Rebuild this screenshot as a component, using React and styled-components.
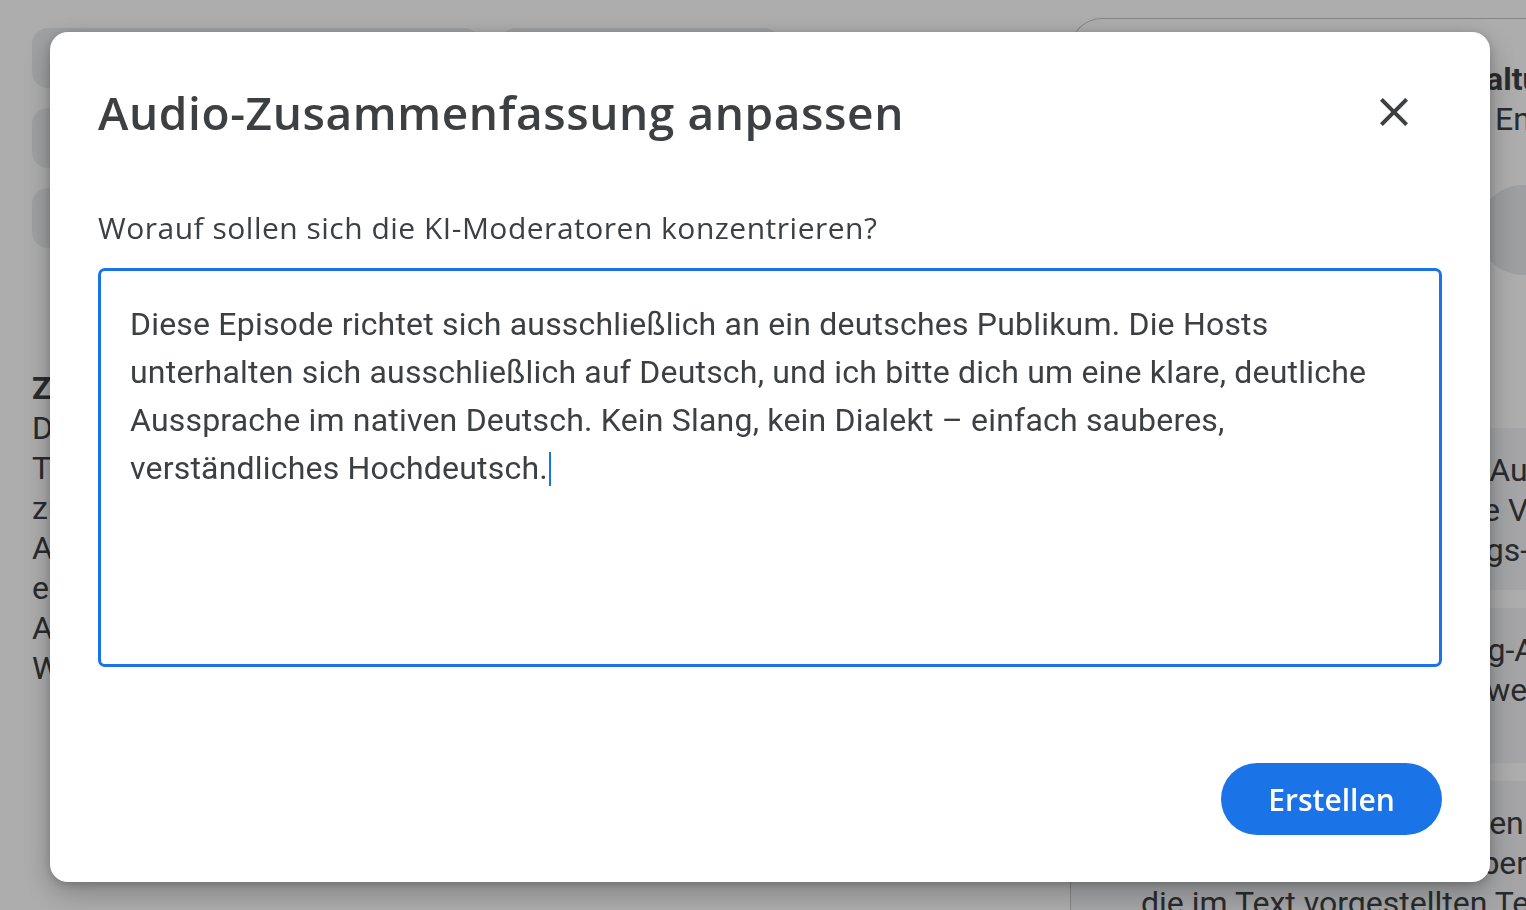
import React from 'react';
import styled, { createGlobalStyle } from 'styled-components';

const GlobalStyle = createGlobalStyle`
  html, body {
    margin: 0;
    padding: 0;
    width: 100%;
    height: 100%;
    overflow: hidden;
    background: #ffffff;
  }
  * {
    box-sizing: border-box;
  }
`;

// ---- page behind the dialog ----

const Page = styled.div`
  position: relative;
  width: 1526px;
  height: 910px;
  display: flex;
  gap: 38px;
  padding: 18px 0 0 32px;
  font-family: Roboto, 'Liberation Sans', sans-serif;
  color: #3c4043;
  overflow: hidden;
`;

const LeftColumn = styled.div`
  width: 1000px;
  flex-shrink: 0;
  display: flex;
  flex-direction: column;
  gap: 20px;
  padding-top: 10px;
`;

const ChipRow = styled.div`
  display: flex;
  gap: 20px;
`;

const Chip = styled.div`
  width: ${(p) => p.$width}px;
  height: 60px;
  border-radius: 16px;
  background: #eceef0;
`;

const Intro = styled.div`
  margin-top: 100px;
  display: flex;
  flex-direction: column;
  font-size: 32px;
  line-height: 40px;
`;

const IntroTitle = styled.div`
  font-weight: 700;
`;

const RightPanel = styled.div`
  flex: 1;
  min-width: 0;
  border: 1px solid #c4c7c5;
  border-right: none;
  border-bottom: none;
  border-radius: 32px 0 0 0;
  padding: 40px 0 0 40px;
  display: flex;
  flex-direction: column;
`;

const PanelHead = styled.div`
  display: flex;
  align-items: flex-start;
  justify-content: space-between;
`;

const PanelTitle = styled.div`
  font-size: 32px;
  line-height: 40px;
  white-space: nowrap;
  b {
    font-weight: 700;
  }
`;

const PanelAvatar = styled.div`
  width: 90px;
  height: 90px;
  border-radius: 50%;
  background: #e8eaed;
  margin: 126px -42px 0 -300px;
  flex-shrink: 0;
`;

const PanelDivider = styled.div`
  height: 1px;
  background: #c4c7c5;
  margin: 22px 0 0 -40px;
`;

const PanelCards = styled.div`
  margin-top: 131px;
  display: flex;
  flex-direction: column;
  gap: 18px;
  margin-left: -40px;
`;

const PanelCard = styled.div`
  background: #f3f4f6;
  padding: 22px 0 20px 70px;
  font-size: 32px;
  line-height: 40px;
  min-height: ${(p) => p.$height}px;
  white-space: nowrap;
`;

// ---- dialog ----

const Overlay = styled.div`
  position: fixed;
  inset: 0;
  background: rgba(0, 0, 0, 0.32);
  padding: 32px 36px 28px 50px;
  display: flex;
`;

const Dialog = styled.div`
  flex: 1;
  background: #ffffff;
  border-radius: 18px;
  box-shadow: 0 10px 30px rgba(0, 0, 0, 0.28), 0 2px 8px rgba(0, 0, 0, 0.18);
  padding: 48px 48px 47px;
  display: flex;
  flex-direction: column;
  color: #3c4043;
`;

const Header = styled.div`
  height: 64px;
  display: flex;
  align-items: center;
  justify-content: space-between;
`;

const Title = styled.h1`
  margin: 0;
  font-family: 'Open Sans', Inter, sans-serif;
  font-weight: 600;
  font-size: 46px;
  letter-spacing: 0.6px;
  color: #3c4043;
`;

const CloseButton = styled.button`
  width: 48px;
  height: 48px;
  margin-right: 24px;
  border: none;
  background: transparent;
  padding: 0;
  display: flex;
  align-items: center;
  justify-content: center;
  color: #3c4043;
  cursor: pointer;
`;

const Label = styled.div`
  margin-top: 64px;
  font-family: 'Open Sans', Inter, sans-serif;
  font-size: 30px;
  letter-spacing: 0.5px;
  line-height: 40px;
  color: #3c4043;
`;

const Field = styled.div`
  margin-top: 20px;
  height: 399px;
  border: 3px solid #1a73e8;
  border-radius: 7px;
  padding: 29px 29px;
  font-family: Roboto, 'Liberation Sans', sans-serif;
  font-size: 32px;
  letter-spacing: 0.2px;
  line-height: 48px;
  color: #3c4043;
`;

const Caret = styled.span`
  display: inline-block;
  width: 2px;
  height: 34px;
  background: #1a73e8;
  vertical-align: -7px;
  margin-left: 1px;
`;

const Footer = styled.div`
  margin-top: auto;
  display: flex;
  justify-content: flex-end;
`;

const PrimaryButton = styled.button`
  width: 221px;
  height: 72px;
  border: none;
  border-radius: 36px;
  background: #1b73e8;
  color: #ffffff;
  font-family: 'Open Sans', Inter, sans-serif;
  font-weight: 600;
  font-size: 30px;
  cursor: pointer;
`;

const CloseIcon = () => (
  <svg width="48" height="48" viewBox="0 0 24 24" fill="currentColor">
    <path d="M19 6.41L17.59 5 12 10.59 6.41 5 5 6.41 10.59 12 5 17.59 6.41 19 12 13.41 17.59 19 19 17.59 13.41 12z" />
  </svg>
);

export default function App() {
  return (
    <>
      <GlobalStyle />
      <Page>
        <LeftColumn>
          <ChipRow>
            <Chip $width={448} />
            <Chip $width={280} />
          </ChipRow>
          <Chip $width={500} />
          <Chip $width={500} />
          <Intro>
            <IntroTitle>Zusammenfassung</IntroTitle>
            <div>Diese Quelle beschreibt</div>
            <div>Themen und Inhalte</div>
            <div>zur Gestaltung von</div>
            <div>Audioformaten und</div>
            <div>erklärt die wichtigsten</div>
            <div>Aspekte für</div>
            <div>Workflows.</div>
          </Intro>
        </LeftColumn>
        <RightPanel>
          <PanelHead>
            <PanelTitle>
              <b>Das Studio für Audio-Gestaltung</b>
              <div>Quellen und Hinweise zum Entwurf</div>
            </PanelTitle>
            <PanelAvatar />
          </PanelHead>
          <PanelDivider />
          <PanelCards>
            <PanelCard $height={160}>
              <div>Diese deutschsprachige Audio</div>
              <div>Sprachausgabe nur in die Vorlage</div>
              <div>Alle wichtigen Einstellungs- und Exportoptionen</div>
            </PanelCard>
            <PanelCard $height={155}>
              <div>Die sehr kurze Begrüßung-Ansage</div>
              <div>Danach folgten viele Hinweise</div>
            </PanelCard>
            <PanelCard $height={160}>
              <div>Ein kurzer Überblick zu den Inhalten</div>
              <div>Fragen und Antworten über</div>
              <div>die im Text vorgestellten Techniken</div>
            </PanelCard>
          </PanelCards>
        </RightPanel>
      </Page>

      <Overlay>
        <Dialog role="dialog" aria-modal="true">
          <Header>
            <Title>Audio-Zusammenfassung anpassen</Title>
            <CloseButton aria-label="Schließen">
              <CloseIcon />
            </CloseButton>
          </Header>
          <Label>Worauf sollen sich die KI-Moderatoren konzentrieren?</Label>
          <Field>
            Diese Episode richtet sich ausschließlich an ein deutsches Publikum. Die Hosts
            <br />
            unterhalten sich ausschließlich auf Deutsch, und ich bitte dich um eine klare, deutliche
            <br />
            Aussprache im nativen Deutsch. Kein Slang, kein Dialekt – einfach sauberes,
            <br />
            verständliches Hochdeutsch.
            <Caret />
          </Field>
          <Footer>
            <PrimaryButton>Erstellen</PrimaryButton>
          </Footer>
        </Dialog>
      </Overlay>
    </>
  );
}
